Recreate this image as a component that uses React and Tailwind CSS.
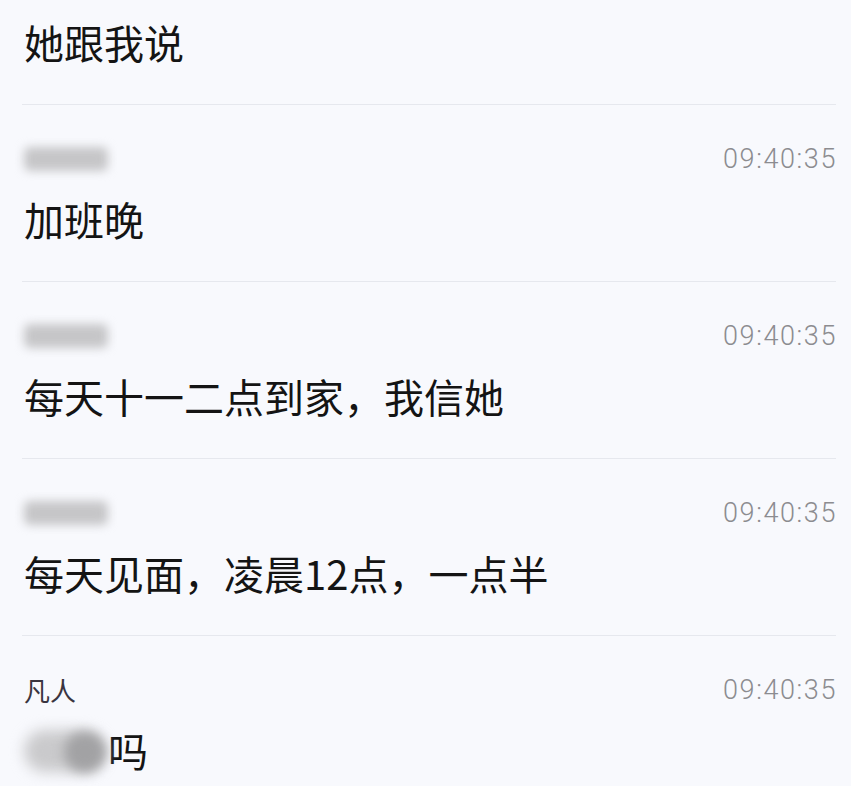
import React from "react";

const cjk = { fontFamily: '"Noto Sans CJK SC", "Noto Sans", sans-serif' };
const ts = { fontFamily: 'Roboto, "Noto Sans", sans-serif' };

function BlurName() {
  return (
    <div className="h-[30px] flex items-center">
      <div className="w-[84px] h-[24px] rounded-[6px] bg-[#c6c6c8] blur-[5px]" />
    </div>
  );
}

function Header({ name }) {
  return (
    <div className="flex items-center justify-between h-[30px]">
      {name ? (
        <span className="text-[26px] leading-[30px] text-[#3a3540]" style={cjk}>{name}</span>
      ) : (
        <BlurName />
      )}
      <span className="text-[27px] leading-[30px] tracking-[1.6px] font-light text-[#8c8c90] -mr-[1px]" style={ts}>
        09:40:35
      </span>
    </div>
  );
}

function Section({ name, children, last }) {
  return (
    <div className={"border-t border-[#e6e8ee] ml-[22px] mr-[15px] pl-[2px] pt-[39px] " + (last ? "pb-[10px]" : "pb-[38px]")}>
      <Header name={name} />
      <div className="mt-[21px] h-[48px] text-[40px] leading-[48px] text-[#141414]" style={cjk}>
        {children}
      </div>
    </div>
  );
}

export default function App() {
  return (
    <div className="w-[851px] h-[786px] overflow-hidden bg-[#f8f9fd]">
      <div className="ml-[22px] mr-[15px] pl-[2px] pt-[18px] pb-[38px]">
        <div className="h-[48px] text-[40px] leading-[48px] text-[#141414]" style={cjk}>她跟我说</div>
      </div>
      <Section>加班晚</Section>
      <Section>每天十一二点到家，我信她</Section>
      <Section>每天见面，凌晨12点，一点半</Section>
      <Section name="凡人" last>
        <div className="flex items-center h-[48px]">
          <div className="relative w-[84px] h-[48px]">
            <div className="absolute left-[0px] top-[4px] w-[80px] h-[42px] rounded-full bg-[#cacacc] blur-[7px]" />
            <div className="absolute left-[40px] top-[6px] w-[42px] h-[40px] rounded-full bg-[#a2a2a4] blur-[6px]" />
          </div>
          <span>吗</span>
        </div>
      </Section>
    </div>
  );
}
